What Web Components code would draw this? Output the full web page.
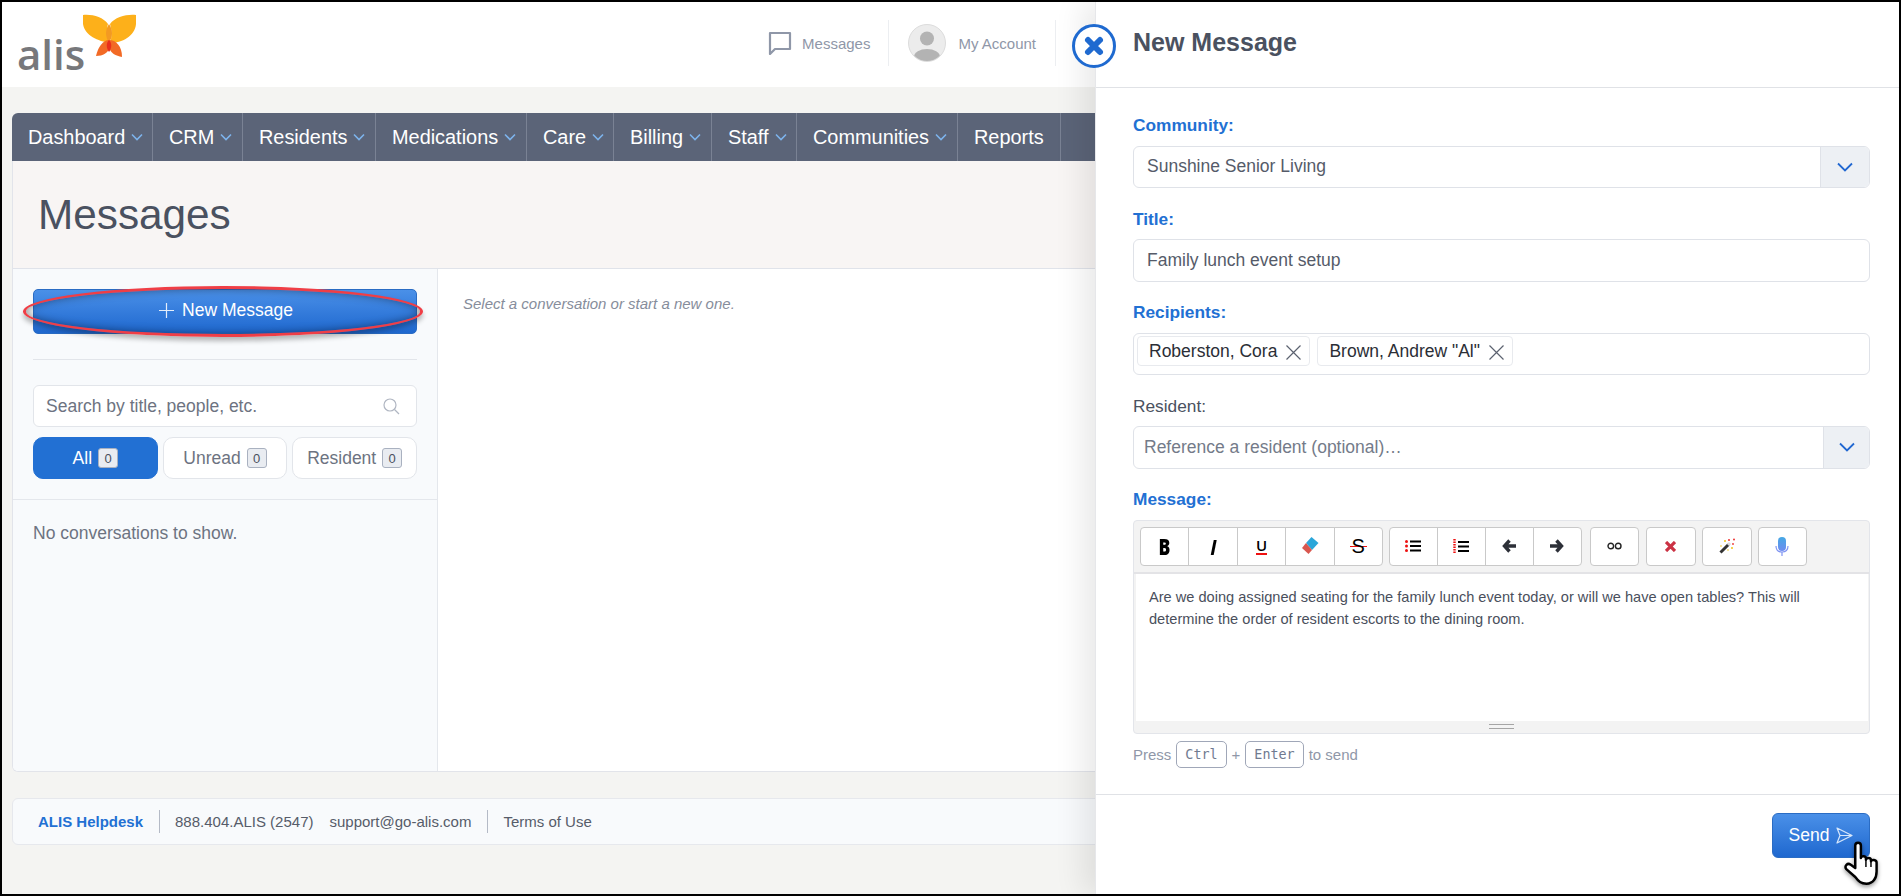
<!DOCTYPE html>
<html lang="en">
<head>
<meta charset="utf-8">
<title>Messages</title>
<style>
  html, body { margin: 0; padding: 0; }
  body {
    width: 1901px;
    height: 896px;
    box-sizing: border-box;
    border: 2px solid #000;
    overflow: hidden;
    position: relative;
    background: #f4f4f2;
    font-family: "Liberation Sans", Arial, sans-serif;
    font-size: 17.5px;
    color: #4a5160;
  }
</style>
</head>
<body>
<alis-header></alis-header>
<alis-main>
  <alis-nav></alis-nav>
  <alis-page></alis-page>
  <alis-footer></alis-footer>
</alis-main>
<message-panel></message-panel>

<script>
/* Top bar with logo and account links */
class AlisHeader extends HTMLElement {
  constructor() {
    super();
    this.attachShadow({ mode: 'open' });
  }
  connectedCallback() {
    this.shadowRoot.innerHTML = `
      <style>
        :host { display: flex; height: 85px; background: #fff; align-items: center; font-size: 15px; color: #8f97a8; }
        .logo { align-self: flex-start; margin: 10px 0 0 14px; }
        .links { margin-left: auto; margin-right: 843px; margin-bottom: 3px; display: flex; align-items: center; height: 46px; }
        .link { display: flex; align-items: center; height: 46px; border-right: 1px solid #eceef1; }
        .msg { padding-right: 18px; gap: 10px; }
        .acct { padding: 0 19px 0 19px; gap: 12px; }
        .avatar { width: 36px; height: 36px; border: 1px solid #dcdcdc; border-radius: 50%; background: #ececec; overflow: hidden; display: block; }
      </style>
      <svg class="logo" width="125" height="76" viewBox="16 12 125 76">
        <text x="17" y="70" font-family="Open Sans" font-size="42" font-weight="600" fill="#77787b">alis</text>
        <path d="M83 15 C92 14 103 17 108 24 C106 30 107 37 110 43 C98 41 85 36 83 24 Z" fill="#fdb01a"/>
        <path d="M136 15 C127 14 115 17 110 24 C112 30 112 37 110 43 C122 43 135 36 136 24 Z" fill="#fdb01a"/>
        <path d="M109 24 C105 30 105 36 109 43 C113 36 113 30 109 24 Z" fill="#f39a22"/>
        <path d="M109 40 C103 40 98 47 96 56 C103 56 108 53 110 47 Z" fill="#f26a25"/>
        <path d="M109 40 C116 40 122 46 122 57 C116 56 110 53 109 47 Z" fill="#f26a25"/>
        <path d="M109 40 C106 43 106 48 109 52 C112 48 112 43 109 40 Z" fill="#e8301c"/>
      </svg>
      <div class="links">
        <div class="link msg">
          <svg width="24" height="24" viewBox="0 0 24 24" fill="none" stroke="#8f97a8" stroke-width="2.2">
            <path d="M2 2 H22 V18 H7 L2 23 Z" stroke-linejoin="round"/>
          </svg>
          <span>Messages</span>
        </div>
        <div class="link acct">
          <svg class="avatar" viewBox="0 0 36 36">
            <circle cx="18" cy="13.5" r="7" fill="#b3b3b3"/>
            <ellipse cx="18" cy="32" rx="13" ry="8" fill="#b3b3b3"/>
          </svg>
          <span>My Account</span>
        </div>
      </div>
    `;
  }
}

class AlisMain extends HTMLElement {
  constructor() {
    super();
    this.attachShadow({ mode: 'open' });
  }
  connectedCallback() {
    this.shadowRoot.innerHTML = `
      <style>
        :host { display: block; padding: 26px 8px 0 10px; }
      </style>
      <slot></slot>
    `;
  }
}

/* Main menu */
class AlisNav extends HTMLElement {
  constructor() {
    super();
    this.attachShadow({ mode: 'open' });
  }
  connectedCallback() {
    const items = [
      ['Dashboard', 141, true], ['CRM', 90, true], ['Residents', 133, true], ['Medications', 151, true],
      ['Care', 87, true], ['Billing', 98, true], ['Staff', 85, true], ['Communities', 161, true], ['Reports', 103, false]
    ];
    const chevron = `<svg width="12" height="8" viewBox="0 0 12 8" fill="none" stroke="#7db3ec" stroke-width="1.6"><path d="M1 1.5 L6 6.5 L11 1.5"/></svg>`;
    this.shadowRoot.innerHTML = `
      <style>
        :host { display: flex; height: 48px; background: #5b6478; color: #fff; font-size: 19.9px; border-radius: 6px 0 0 0; }
        .item { box-sizing: border-box; display: flex; align-items: center; gap: 6px; padding-left: 16px; border-right: 1px solid #7a8294; height: 48px; white-space: nowrap; }
      </style>
      ${items.map(([name, w, sub]) => `<div class="item" style="width:${w}px"><span>${name}</span>${sub ? chevron : ''}</div>`).join('')}
    `;
  }
}

/* Page card: title band, sidebar, and conversation area */
class AlisPage extends HTMLElement {
  constructor() {
    super();
    this.attachShadow({ mode: 'open' });
  }
  connectedCallback() {
    this.shadowRoot.innerHTML = `
      <style>
        :host { display: block; height: 611px; box-sizing: border-box; border: 1px solid #e2e4ea; border-top: 0; border-radius: 0 0 6px 6px; background: #fff; overflow: hidden; }
        .band { height: 108px; box-sizing: border-box; background: #f8f5f4; border-bottom: 1px solid #e0e3ea; display: flex; align-items: center; padding: 0 0 0 25px; font-size: 42.3px; color: #4a5160; }
        .cols { display: flex; height: 502px; }
        .empty { padding: 26px 0 0 25px; font-size: 15px; font-style: italic; color: #868d9b; }
      </style>
      <div class="band">Messages</div>
      <div class="cols">
        <alis-sidebar></alis-sidebar>
        <div class="empty">Select a conversation or start a new one.</div>
      </div>
    `;
  }
}

class AlisSidebar extends HTMLElement {
  constructor() {
    super();
    this.attachShadow({ mode: 'open' });
  }
  connectedCallback() {
    this.shadowRoot.innerHTML = `
      <style>
        :host { display: block; box-sizing: border-box; width: 425px; flex: none; background: #f8fafc; border-right: 1px solid #e4e7ec; }
        .top { padding: 20px 20px 20px; border-bottom: 1px solid #e4e7ec; }
        .new { position: relative; height: 45px; box-sizing: border-box; border: 1px solid #2a6cc4; border-radius: 5px; background: linear-gradient(#4a90e8, #1f68cf); color: #fff; display: flex; align-items: center; justify-content: center; gap: 8px; padding: 0 0 2px 2px; }
        .ring { position: absolute; left: -11px; right: -7px; top: -4px; bottom: -4px; border: 3.5px solid #ef3e46; border-radius: 50%; box-shadow: inset 0 0 8px rgba(0,0,0,.42), 0 4px 5px rgba(0,0,0,.28); }
        hr { border: 0; border-top: 1px solid #e2e5ea; margin: 25px 0 25px; }
        .search { height: 42px; box-sizing: border-box; background: #fff; border: 1px solid #e2e5ea; border-radius: 6px; display: flex; align-items: center; justify-content: space-between; padding: 0 16px 0 12px; color: #6d7381; }
        .tabs { display: flex; gap: 5px; margin-top: 10px; }
        .tab { height: 42px; box-sizing: border-box; flex: 1 1 0; border: 1px solid #e2e5ea; border-radius: 10px; background: #fff; display: flex; align-items: center; justify-content: center; gap: 6px; color: #6d7381; }
        .tab.on { background: #2270d3; border-color: #2270d3; color: #fff; }
        .n { box-sizing: border-box; width: 20px; height: 20px; border: 1px solid #a9b1c0; border-radius: 3px; background: #e9ecf1; color: #4a5160; font-size: 13px; display: flex; align-items: center; justify-content: center; }
        .none { padding: 23px 20px; color: #6d7381; }
      </style>
      <div class="top">
        <div class="new">
          <svg width="15" height="15" viewBox="0 0 15 15" stroke="#e4eefb" stroke-width="1.2"><path d="M7.5 0 V15 M0 7.5 H15"/></svg>
          <span>New Message</span>
          <div class="ring"></div>
        </div>
        <hr>
        <div class="search">
          <span>Search by title, people, etc.</span>
          <svg width="17" height="17" viewBox="0 0 17 17" fill="none" stroke="#b0b6c2" stroke-width="1.2"><circle cx="7" cy="7" r="6"/><path d="M11.5 11.5 L16 16"/></svg>
        </div>
        <div class="tabs">
          <div class="tab on">All <span class="n">0</span></div>
          <div class="tab">Unread <span class="n">0</span></div>
          <div class="tab">Resident <span class="n">0</span></div>
        </div>
      </div>
      <div class="none">No conversations to show.</div>
    `;
  }
}

class AlisFooter extends HTMLElement {
  constructor() {
    super();
    this.attachShadow({ mode: 'open' });
  }
  connectedCallback() {
    this.shadowRoot.innerHTML = `
      <style>
        :host { display: flex; align-items: center; height: 47px; box-sizing: border-box; margin-top: 26px; background: #f8fafc; border: 1px solid #e6e8ed; border-radius: 6px; padding-left: 25px; font-size: 15px; color: #565c69; }
        b { color: #2270d3; }
        i { display: block; width: 1px; height: 23px; background: #b4bac6; margin: 0 15px 0 16px; }
        .gap { margin-left: 16px; }
      </style>
      <b>ALIS Helpdesk</b><i></i><span>888.404.ALIS (2547)</span><span class="gap">support@go-alis.com</span><i></i><span>Terms of Use</span>
    `;
  }
}

/* Labelled form row, the control goes in the slot */
class FormField extends HTMLElement {
  constructor() {
    super();
    this.attachShadow({ mode: 'open' });
  }
  connectedCallback() {
    const on = this.hasAttribute('required');
    this.shadowRoot.innerHTML = `
      <style>
        :host { display: block; margin-bottom: 20.5px; }
        label { display: block; height: 22px; line-height: 20px; margin-bottom: 8.5px; font-size: 17.3px; font-weight: ${on ? 700 : 400}; color: ${on ? '#2270d3' : '#4a5160'}; }
      </style>
      <label>${this.getAttribute('label')}</label>
      <slot></slot>
    `;
  }
}

class FormBox extends HTMLElement {
  constructor() {
    super();
    this.attachShadow({ mode: 'open' });
  }
  connectedCallback() {
    const caret = this.getAttribute('caret');
    this.shadowRoot.innerHTML = `
      <style>
        :host { display: flex; height: 42.5px; box-sizing: border-box; border: 1px solid #dfe2e8; border-radius: 6px; background: #fff; overflow: hidden; color: ${this.hasAttribute('muted') ? '#747b89' : '#555b69'}; }
        .v { flex: 1; display: flex; align-items: center; padding-left: ${this.hasAttribute('muted') ? 10 : 13}px; white-space: nowrap; }
        .c { width: ${caret || 0}px; background: #edf0f4; border-left: 1px solid #dfe2e8; display: flex; align-items: center; justify-content: center; }
      </style>
      <div class="v"><slot></slot></div>
      ${caret ? `<div class="c"><svg width="16" height="10" viewBox="0 0 16 10" fill="none" stroke="#2268d1" stroke-width="1.8"><path d="M1 1.5 L8 8.5 L15 1.5"/></svg></div>` : ''}
    `;
  }
}

class RecipientChip extends HTMLElement {
  constructor() {
    super();
    this.attachShadow({ mode: 'open' });
  }
  connectedCallback() {
    this.shadowRoot.innerHTML = `
      <style>
        :host { display: inline-flex; align-items: center; gap: 9px; height: 30px; box-sizing: border-box; border: 1px solid #e8eaee; border-radius: 4px; padding: 0 8px 0 11px; color: #2b2e36; white-space: nowrap; }
        svg { margin-top: 3px; }
      </style>
      <slot></slot>
      <svg width="15" height="15" viewBox="0 0 15 15" stroke="#5c6270" stroke-width="1.2"><path d="M.5 .5 L14.5 14.5 M14.5 .5 L.5 14.5"/></svg>
    `;
  }
}

class ToolButton extends HTMLElement {
  constructor() {
    super();
    this.attachShadow({ mode: 'open' });
  }
  connectedCallback() {
    this.shadowRoot.innerHTML = `
      <style>
        :host { display: flex; align-items: center; justify-content: center; box-sizing: border-box; height: 39px; width: var(--w, 49px); background: #fff; border: 1px solid #c9c9c9; margin-left: -1px; color: #000; }
        :host(:first-child) { margin-left: 0; border-radius: 4px 0 0 4px; }
        :host(:last-child) { border-radius: 0 4px 4px 0; }
        :host(:only-child) { border-radius: 4px; }
      </style>
      <slot></slot>
    `;
  }
}

class MessageEditor extends HTMLElement {
  constructor() {
    super();
    this.attachShadow({ mode: 'open' });
  }
  connectedCallback() {
    this.shadowRoot.innerHTML = `
      <style>
        :host { display: block; box-sizing: border-box; height: 214px; border: 1px solid #e3e5ea; border-radius: 4px; background: #f3f3f3; }
        .bar { display: flex; height: 53px; box-sizing: border-box; padding: 6px 0 0 6px; gap: 6px; border-bottom: 2px solid #e3e3e6; }
        .group { display: flex; }
        .s { display: inline-block; color: #000; line-height: 1; }
        .b { font: 800 22px "Open Sans", sans-serif; transform: scaleX(.8); }
        .i { font: italic 700 22px "Open Sans", sans-serif; transform: scaleX(.9); }
        .u { font: 600 15px "Open Sans", sans-serif; line-height: 15px; border-bottom: 2px solid #e11; }
        .st { font: 400 20px "Liberation Sans", sans-serif; padding: 0 2px; background: linear-gradient(transparent 10.5px, #e11 10.5px, #e11 12px, transparent 12px); }
        .text { height: 147px; box-sizing: border-box; margin: 0 1px 0 2px; background: #fff; padding: 12px 12px 12px 13px; font-size: 14.6px; line-height: 22px; color: #4a4f5c; }
        .grip { height: 12px; display: flex; justify-content: center; padding-top: 3px; box-sizing: border-box; }
        .grip div { width: 25px; height: 3px; border-top: 1px solid #a5a5a5; border-bottom: 1px solid #a5a5a5; }
      </style>
      <div class="bar">
        <div class="group" style="--w:49.400px">
          <tool-button><span class="s b">B</span></tool-button>
          <tool-button><span class="s i">I</span></tool-button>
          <tool-button><span class="s u">U</span></tool-button>
          <tool-button>
            <svg width="18" height="18" viewBox="0 0 18 18"><path d="M10.500 0 L17.500 6 L11 13 L5 6 Z" fill="#2ba6d9"/><path d="M5 6 L11 13 L7.500 17 L1 11 Z" fill="#d9574f"/></svg>
          </tool-button>
          <tool-button><span class="s st">S</span></tool-button>
        </div>
        <div class="group">
          <tool-button>
            <svg width="16" height="12" viewBox="0 0 16 12"><g fill="#e11"><circle cx="1.500" cy="1.500" r="1.500"/><circle cx="1.500" cy="6" r="1.500"/><circle cx="1.500" cy="10.500" r="1.500"/></g><path d="M5 1.500 H16 M5 6 H16 M5 10.500 H16" stroke="#000" stroke-width="2.200"/></svg>
          </tool-button>
          <tool-button>
            <svg width="16" height="15" viewBox="0 0 16 15"><path d="M1.500 0 V15" stroke="#e11" stroke-width="2.400" stroke-dasharray="1.600 .9"/><path d="M5 3 H16 M5 7.500 H16 M5 12 H16" stroke="#000" stroke-width="2.200"/></svg>
          </tool-button>
          <tool-button>
            <svg width="14" height="14" viewBox="0 0 14 14" fill="none" stroke="#2d3038" stroke-width="3.400"><path d="M7.500 1.500 L2.500 7 L7.500 12.500 M3 7 H14"/></svg>
          </tool-button>
          <tool-button>
            <svg width="14" height="14" viewBox="0 0 14 14" fill="none" stroke="#2d3038" stroke-width="3.400"><path d="M6.500 1.500 L11.500 7 L6.500 12.500 M11 7 H0"/></svg>
          </tool-button>
        </div>
        <div class="group" style="margin-left:2px">
          <tool-button>
            <svg width="15" height="8" viewBox="0 0 15 8" fill="none" stroke="#222" stroke-width="1.400"><circle cx="3.800" cy="4" r="2.800"/><circle cx="11.200" cy="4" r="2.800"/></svg>
          </tool-button>
        </div>
        <div class="group" style="margin-left:1px">
          <tool-button style="--w:50px">
            <svg width="11" height="11" viewBox="0 0 11 11" stroke="#cb3244" stroke-width="3.200"><path d="M1 1 L10 10 M10 1 L1 10"/></svg>
          </tool-button>
        </div>
        <div class="group">
          <tool-button style="--w:50px">
            <svg width="16" height="16" viewBox="0 0 16 16"><path d="M1.500 14.500 L9.500 6.500" stroke="#333" stroke-width="3"/><path d="M9 7 L11 5" stroke="#ddd" stroke-width="3"/><g fill="#f0c419"><circle cx="6" cy="3" r="1"/><circle cx="2" cy="8" r=".8"/><circle cx="13" cy="10" r="1"/><circle cx="9" cy="12" r=".8"/></g><g fill="#e33"><circle cx="10" cy="2" r="1"/><circle cx="15" cy="1.500" r="1"/><circle cx="14" cy="6" r=".9"/></g></svg>
          </tool-button>
        </div>
        <div class="group">
          <tool-button>
            <svg width="14" height="19" viewBox="0 0 14 19">
              <defs><linearGradient id="mic" x1="0" y1="0" x2="0" y2="1"><stop offset="0" stop-color="#45a8e4"/><stop offset="1" stop-color="#6f8bf0"/></linearGradient></defs>
              <rect x="3" y="0" width="8" height="14" rx="4" fill="url(#mic)"/>
              <path d="M1 9 C1 13 3.500 15 7 15 C10.500 15 13 13 13 9 M7 15 V19" fill="none" stroke="#7f94f2" stroke-width="1.200"/>
            </svg>
          </tool-button>
        </div>
      </div>
      <div class="text"><slot></slot></div>
      <div class="grip"><div></div></div>
    `;
  }
}

class KeyHint extends HTMLElement {
  constructor() {
    super();
    this.attachShadow({ mode: 'open' });
  }
  connectedCallback() {
    this.shadowRoot.innerHTML = `
      <style>
        :host { display: flex; align-items: center; height: 28px; margin-top: 7px; font-size: 15px; color: #8f97a8; gap: 5px; }
        kbd { box-sizing: border-box; height: 27px; padding: 0 8px; display: flex; align-items: center; border: 1px solid #a0a7b8; border-radius: 5px; font: 13.400px "DejaVu Sans Mono", monospace; color: #707a90; }
      </style>
      <span>Press</span><kbd>Ctrl</kbd><span>+</span><kbd>Enter</kbd><span>to send</span>
    `;
  }
}

/* Slide-over panel on the right */
class MessagePanel extends HTMLElement {
  constructor() {
    super();
    this.attachShadow({ mode: 'open' });
  }
  connectedCallback() {
    this.shadowRoot.innerHTML = `
      <style>
        :host { position: absolute; top: 0; right: 0; bottom: 0; width: 804px; box-sizing: border-box; background: #fff; border-left: 1px solid #e6e7ea; box-shadow: -12px 0 28px rgba(0,0,0,.09); display: flex; flex-direction: column; }
        .head { height: 86px; flex: none; box-sizing: border-box; border-bottom: 1px solid #e0e2e6; display: flex; align-items: center; padding: 0 0 5px 37px; font-size: 25px; font-weight: 700; color: #4a5160; }
        .close { position: absolute; left: -24px; top: 22px; width: 44px; height: 44px; box-sizing: border-box; border-radius: 50%; background: #fff; border: 3px solid #1f6ad0; display: flex; align-items: center; justify-content: center; }
        .body { flex: 1; padding: 27px 29px 0 37px; }
        .foot { flex: none; height: 100px; box-sizing: border-box; border-top: 1px solid #e0e2e6; padding: 18px 29px 0 0; display: flex; justify-content: flex-end; align-items: flex-start; }
        .send { box-sizing: border-box; width: 98px; height: 45px; border: 1px solid #2a6cc4; border-radius: 6px; background: linear-gradient(#4a90e8, #1f68cf); color: #fff; display: flex; align-items: center; justify-content: center; gap: 7px; }
        .chips { display: flex; align-items: flex-start; gap: 7px; margin: 0 0 5px -10px; }
        .hand { position: absolute; left: 747px; top: 838px; filter: drop-shadow(0 2px 2px rgba(0,0,0,.4)); }
      </style>
      <div class="close">
        <svg width="22" height="22" viewBox="0 0 22 22" stroke="#1f6ad0" stroke-width="6" stroke-linecap="round"><path d="M5 5 L17 17 M17 5 L5 17"/></svg>
      </div>
      <div class="head">New Message</div>
      <div class="body">
        <form-field label="Community:" required><form-box caret="48">Sunshine Senior Living</form-box></form-field>
        <form-field label="Title:" required><form-box>Family lunch event setup</form-box></form-field>
        <form-field label="Recipients:" required>
          <form-box>
            <div class="chips">
              <recipient-chip>Roberston, Cora</recipient-chip>
              <recipient-chip>Brown, Andrew "Al"</recipient-chip>
            </div>
          </form-box>
        </form-field>
        <form-field label="Resident:"><form-box caret="45" muted>Reference a resident (optional)…</form-box></form-field>
        <form-field label="Message:" required style="margin-bottom:0">
          <message-editor>Are we doing assigned seating for the family lunch event today, or will we have open tables? This will determine the order of resident escorts to the dining room.</message-editor>
          <key-hint></key-hint>
        </form-field>
      </div>
      <div class="foot">
        <div class="send">
          <span>Send</span>
          <svg width="17" height="17" viewBox="0 0 17 17" fill="none" stroke="#d7e7fb" stroke-width="1.2" stroke-linejoin="round"><path d="M1 1 L16 8.500 L1 16 L4 8.500 Z M4 8.500 H16"/></svg>
        </div>
      </div>
      <svg class="hand" width="38" height="46" viewBox="1 1 32 41">
        <path d="M11 6 C11 2.500 16 2.500 16 6 V17 C16 15 20.500 15 20.500 17.500 V18.500 C21 16.500 25 16.500 25 19 V20 C25.500 18 30 18.500 30 21 V29 C30 35 27 40 21 40 C16 40 14 38 11 34 L3 27 C1 24 4 21 7 23 L11 26 Z" fill="#fff" stroke="#000" stroke-width="2.200" stroke-linejoin="round"/>
        <path d="M20.500 18 V25 M25 20 V25" stroke="#000" stroke-width="1.300"/>
      </svg>
    `;
  }
}

customElements.define('alis-header', AlisHeader);
customElements.define('alis-main', AlisMain);
customElements.define('alis-nav', AlisNav);
customElements.define('alis-page', AlisPage);
customElements.define('alis-sidebar', AlisSidebar);
customElements.define('alis-footer', AlisFooter);
customElements.define('form-field', FormField);
customElements.define('form-box', FormBox);
customElements.define('recipient-chip', RecipientChip);
customElements.define('tool-button', ToolButton);
customElements.define('message-editor', MessageEditor);
customElements.define('key-hint', KeyHint);
customElements.define('message-panel', MessagePanel);
</script>
</body>
</html>
